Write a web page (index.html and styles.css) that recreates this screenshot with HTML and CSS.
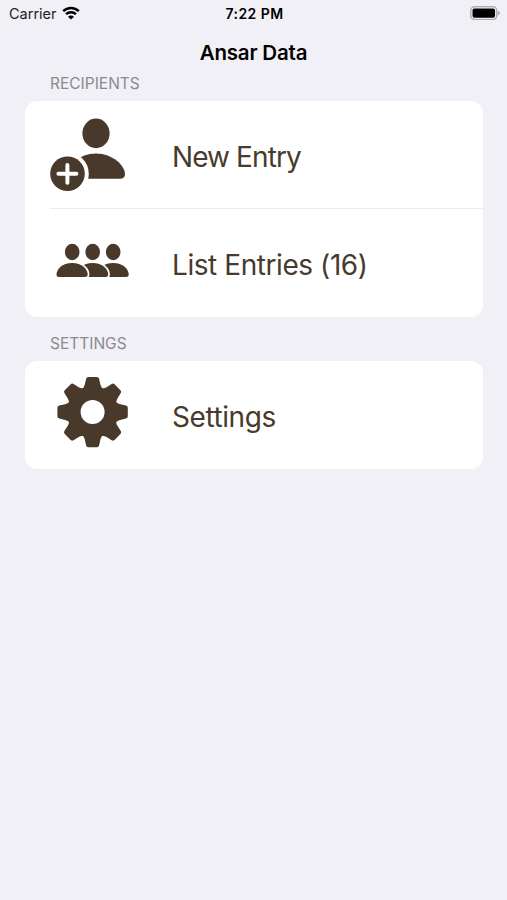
FILE: index.html
```
<!DOCTYPE html>
<html lang="en">
<head>
    <meta charset="UTF-8">
    <meta name="viewport" content="width=device-width, initial-scale=1.0">
    <title>Ansar Data</title>
    <link rel="stylesheet" href="styles.css">
</head>
<body>
    <div class="status-bar">
        <div class="carrier">
            <span>Carrier</span>
            <svg class="wifi" viewBox="0 0 18 14">
                <path d="M1.2 5.2a11.2 11.2 0 0 1 15.6 0" />
                <path d="M4 8.2a7.2 7.2 0 0 1 10 0" />
                <path class="dot" d="M9 13.6 L6 10.7 A4.2 4.2 0 0 1 12 10.7 Z" />
            </svg>
        </div>
        <div class="time">7:22 PM</div>
        <svg class="battery" viewBox="0 0 30 14">
            <rect x="0.8" y="0.8" width="26" height="12.6" rx="3.8" fill="#fff" stroke="#adadb0" stroke-width="1.5" />
            <rect x="2.5" y="2.5" width="22.6" height="9.2" rx="2" fill="#000" />
            <path d="M28 5 Q30 5.6 30 7.1 Q30 8.6 28 9.2 Z" fill="#adadb0" />
        </svg>
    </div>

    <h1>Ansar Data</h1>

    <h2>RECIPIENTS</h2>
    <div class="card">
        <div class="row">
            <svg class="icon" viewBox="50 101 90 108">
                <ellipse cx="96" cy="133.4" rx="13.6" ry="14.8" />
                <path d="M72 178.8H120Q125 178.8 125 174C125 166 113 153.5 96 153.5S67 166 67 174Q67 178.8 72 178.8Z" />
                <circle class="gap" cx="67.5" cy="173.7" r="21.3" />
                <circle cx="67.5" cy="173.7" r="17.3" />
                <path class="plus" d="M58.4 173.7H76.4M67.4 164.9V182.7" />
            </svg>
            <span class="new-entry">New Entry</span>
        </div>
        <div class="row">
            <svg class="icon" viewBox="50 209 90 108">
                <defs>
                    <path id="body" d="M59 277H85Q87.7 277 87.7 274.5C87.7 269.5 82 263.1 72.1 263.1S56.5 269.5 56.5 274.5Q56.5 277 59 277Z" />
                </defs>
                <ellipse cx="113.2" cy="252" rx="7.3" ry="8.2" />
                <use href="#body" x="41" />
                <use class="gap" href="#body" x="20.5" />
                <ellipse cx="92.7" cy="252" rx="7.3" ry="8.2" />
                <use href="#body" x="20.5" />
                <use class="gap" href="#body" />
                <ellipse cx="72.2" cy="252" rx="7.3" ry="8.2" />
                <use href="#body" />
            </svg>
            <span>List Entries (16)</span>
        </div>
    </div>

    <h2>SETTINGS</h2>
    <div class="card">
        <div class="row">
            <svg class="icon" viewBox="50 361 90 108">
                <defs>
                    <path id="tooth" d="M-11 -22Q-8.3 -25 -7.8 -27.5L-6.5 -33.4Q-6 -35.2 -4.2 -35.2H4.2Q6 -35.2 6.5 -33.4L7.8 -27.5Q8.3 -25 11 -22Z" />
                </defs>
                <g transform="translate(92.6 412.1)">
                    <circle r="25.6" />
                    <use href="#tooth" />
                    <use href="#tooth" transform="rotate(45)" />
                    <use href="#tooth" transform="rotate(90)" />
                    <use href="#tooth" transform="rotate(135)" />
                    <use href="#tooth" transform="rotate(180)" />
                    <use href="#tooth" transform="rotate(225)" />
                    <use href="#tooth" transform="rotate(270)" />
                    <use href="#tooth" transform="rotate(315)" />
                    <circle class="hole" r="12" />
                </g>
            </svg>
            <span>Settings</span>
        </div>
    </div>
</body>
</html>
```

FILE: styles.css
```
body {
    font-family: Inter, "Liberation Sans", sans-serif;
    margin: 0;
    min-height: 100vh;
    background-color: #f1f0f6;
    color: #000;
}

.status-bar {
    display: grid;
    grid-template-columns: 1fr auto 1fr;
    align-items: center;
    height: 26px;
    padding: 0 7px 2px 9px;
    font-size: 14.5px;
}

.carrier {
    display: flex;
    align-items: center;
    gap: 5px;
    color: #222;
}

.wifi {
    width: 18px;
    height: 14px;
    fill: none;
    stroke: #000;
    stroke-width: 2.4;
}

.wifi .dot {
    fill: #000;
    stroke: none;
}

.time {
    font-weight: 600;
    font-size: 14px;
    letter-spacing: 0.45px;
}

.battery {
    width: 30px;
    height: 14px;
    justify-self: end;
}

h1 {
    margin: 0;
    height: 46px;
    line-height: 49px;
    font-size: 20.5px;
    font-weight: 600;
    letter-spacing: -0.2px;
    text-align: center;
}

h2 {
    margin: 0 0 8px 50px;
    height: 19px;
    line-height: 19px;
    font-size: 15.5px;
    font-weight: 400;
    color: #8a8a8f;
}

.card {
    margin: 0 24px 17px 25px;
    border-radius: 12px;
    background-color: #fff;
    overflow: hidden;
}

.row {
    display: flex;
    align-items: center;
    gap: 32px;
    height: 108px;
    margin-left: 25px;
    font-size: 28px;
    letter-spacing: -0.43px;
    color: #483a2c;
}

.row span {
    margin-top: 3px;
}

.row .new-entry {
    letter-spacing: -0.9px;
}

.row + .row {
    box-shadow: 0 -1px #ececef;
}

.icon {
    width: 90px;
    height: 108px;
    fill: #48392b;
}

.gap {
    fill: #fff;
    stroke: #fff;
    stroke-width: 3.4;
}

circle.gap {
    stroke: none;
}

.plus {
    stroke: #fff;
    stroke-width: 4;
    stroke-linecap: round;
}

.hole {
    fill: #fff;
}
```
